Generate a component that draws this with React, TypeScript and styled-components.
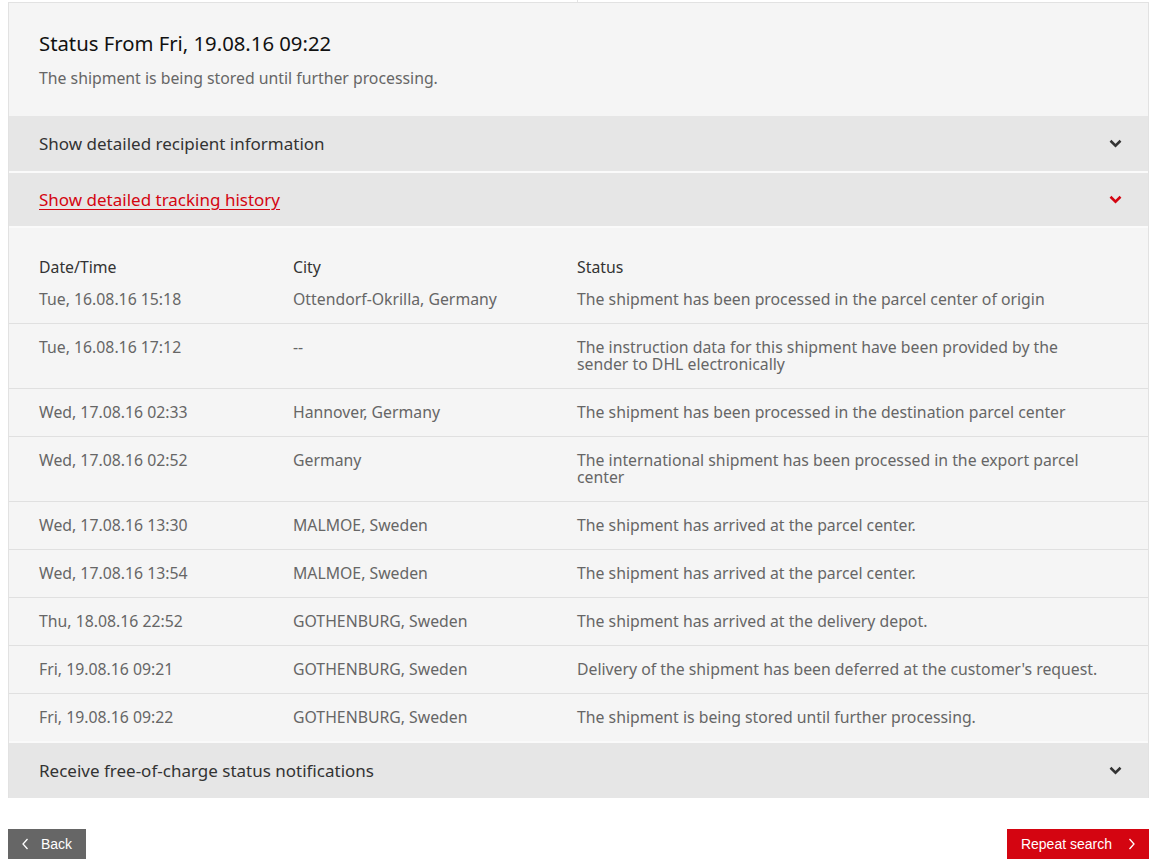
import React from 'react';
import styled, {createGlobalStyle} from 'styled-components';

const GlobalStyle = createGlobalStyle`
  *, *::before, *::after { box-sizing: border-box; }
  body { margin: 0 8px; background: #fff; font-family: "Noto Sans", "Open Sans", sans-serif; }
`;

interface EventRow {
  date: string;
  city: string;
  status: string;
}

const events: EventRow[] = [
  {date: 'Tue, 16.08.16 15:18', city: 'Ottendorf-Okrilla, Germany', status: 'The shipment has been processed in the parcel center of origin'},
  {date: 'Tue, 16.08.16 17:12', city: '--', status: 'The instruction data for this shipment have been provided by the sender to DHL electronically'},
  {date: 'Wed, 17.08.16 02:33', city: 'Hannover, Germany', status: 'The shipment has been processed in the destination parcel center'},
  {date: 'Wed, 17.08.16 02:52', city: 'Germany', status: 'The international shipment has been processed in the export parcel center'},
  {date: 'Wed, 17.08.16 13:30', city: 'MALMOE, Sweden', status: 'The shipment has arrived at the parcel center.'},
  {date: 'Wed, 17.08.16 13:54', city: 'MALMOE, Sweden', status: 'The shipment has arrived at the parcel center.'},
  {date: 'Thu, 18.08.16 22:52', city: 'GOTHENBURG, Sweden', status: 'The shipment has arrived at the delivery depot.'},
  {date: 'Fri, 19.08.16 09:21', city: 'GOTHENBURG, Sweden', status: "Delivery of the shipment has been deferred at the customer's request."},
  {date: 'Fri, 19.08.16 09:22', city: 'GOTHENBURG, Sweden', status: 'The shipment is being stored until further processing.'},
];

const Chevron = ({color}: {color: string}) => (
  <svg width="13" height="9" viewBox="0 0 13 9">
    <path d="M1.5 1.8 L6.5 6.6 L11.5 1.8" fill="none" stroke={color} strokeWidth="2.6" strokeLinejoin="miter" />
  </svg>
);

const TopStrip = styled.div`
  display: grid; grid-template-columns: 570px 1fr; height: 2px;
  > div:first-child { border-right: 1px solid #e4e4e4; }
`;

const Panel = styled.div`
  background: #f5f5f5;
  border: 1px solid #e2e2e2;
  border-bottom: none;
`;

const StatusBox = styled.div`
  padding: 27px 30px 28px;
  h2 { margin: 0; font-size: 20.3px; font-weight: 400; color: #111; line-height: 26px; }
  p { margin: 12px 0 0; font-size: 15.8px; color: #666; line-height: 20px; }
`;

const AccHeader = styled.div<{$active?: boolean}>`
  display: flex; align-items: center; justify-content: space-between;
  height: 55px; padding: 0 26px 0 30px;
  background: #e6e6e6;
  font-size: 17px;
  color: ${p => p.$active ? '#d40511' : '#333'};
  & + & { border-top: 2px solid #fafafa; }
  span { text-decoration: ${p => p.$active ? 'underline' : 'none'}; text-underline-offset: 3px; }
`;

const History = styled.div`
  border-top: 2px solid #fafafa;
  border-bottom: 2px solid #fafafa;
`;

const Table = styled.table`
  width: 100%; border-collapse: collapse; table-layout: fixed;
  font-size: 15.8px; line-height: 17px; color: #666;
  th { text-align: left; font-weight: 400; color: #333; padding: 31px 0 0; }
  td { vertical-align: top; padding: 15px 0 15px; }
  th:first-child, td:first-child { padding-left: 30px; }
  th:last-child, td:last-child { padding-right: 50px; }
  tbody tr + tr { border-top: 1px solid #e0e0e0; }
`;

const Actions = styled.div`
  display: flex; justify-content: space-between; margin-top: 31px;
`;

const Button = styled.button<{$primary?: boolean}>`
  display: flex; align-items: center; gap: ${p => p.$primary ? '17px' : '13px'};
  height: 30px; padding: 0 14px;
  border: none; border-radius: 0;
  background: ${p => p.$primary ? '#d40511' : '#666'};
  color: #fff; font-family: "Liberation Sans", Arial, sans-serif; font-size: 14px;
  svg { display: block; }
`;

const Arrow = ({dir}: {dir: 'left' | 'right'}) => (
  <svg width="6" height="12" viewBox="0 0 6 12">
    <path d={dir === 'left' ? 'M5.5 1 L1 6 L5.5 11' : 'M0.5 1 L5 6 L0.5 11'} fill="none" stroke="#fff" strokeWidth="1.3" />
  </svg>
);

export default function App() {
  return (
    <>
      <GlobalStyle />
      <TopStrip><div /><div /></TopStrip>
      <Panel>
        <StatusBox>
          <h2>Status From Fri, 19.08.16 09:22</h2>
          <p>The shipment is being stored until further processing.</p>
        </StatusBox>
        <AccHeader><span>Show detailed recipient information</span><Chevron color="#333" /></AccHeader>
        <AccHeader $active><span>Show detailed tracking history</span><Chevron color="#d40511" /></AccHeader>
        <History>
          <Table>
            <colgroup>
              <col style={{width: 284}} />
              <col style={{width: 284}} />
              <col />
            </colgroup>
            <thead>
              <tr><th>Date/Time</th><th>City</th><th>Status</th></tr>
            </thead>
            <tbody>
              {events.map((e, i) => (
                <tr key={`${e.date}-${i}`}>
                  <td>{e.date}</td>
                  <td>{e.city}</td>
                  <td>{e.status}</td>
                </tr>
              ))}
            </tbody>
          </Table>
        </History>
        <AccHeader><span>Receive free-of-charge status notifications</span><Chevron color="#333" /></AccHeader>
      </Panel>
      <Actions>
        <Button><Arrow dir="left" />Back</Button>
        <Button $primary>Repeat search<Arrow dir="right" /></Button>
      </Actions>
    </>
  );
}
